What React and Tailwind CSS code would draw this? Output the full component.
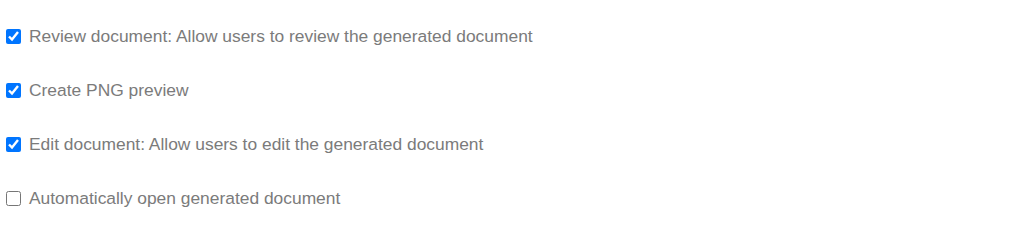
import React from 'react';

const options = [
  { label: 'Review document: Allow users to review the generated document', checked: true },
  { label: 'Create PNG preview', checked: true },
  { label: 'Edit document: Allow users to edit the generated document', checked: true },
  { label: 'Automatically open generated document', checked: false },
];

const App = () => {
  return (
    <div className="w-[1024px] h-[231px] bg-white pt-[26px] font-['Liberation_Sans',Arial,sans-serif] text-[17.4px] text-[#7b7b7b]">
      <div className="flex flex-col gap-[34px]">
        {options.map((opt) => (
          <label key={opt.label} className="flex items-center h-[20px] pl-[6px]">
            <input
              type="checkbox"
              defaultChecked={opt.checked}
              className="w-[15px] h-[15px] m-0 accent-[#0075ff]"
            />
            <span className="ml-[8px]">{opt.label}</span>
          </label>
        ))}
      </div>
    </div>
  );
};

export default App;
